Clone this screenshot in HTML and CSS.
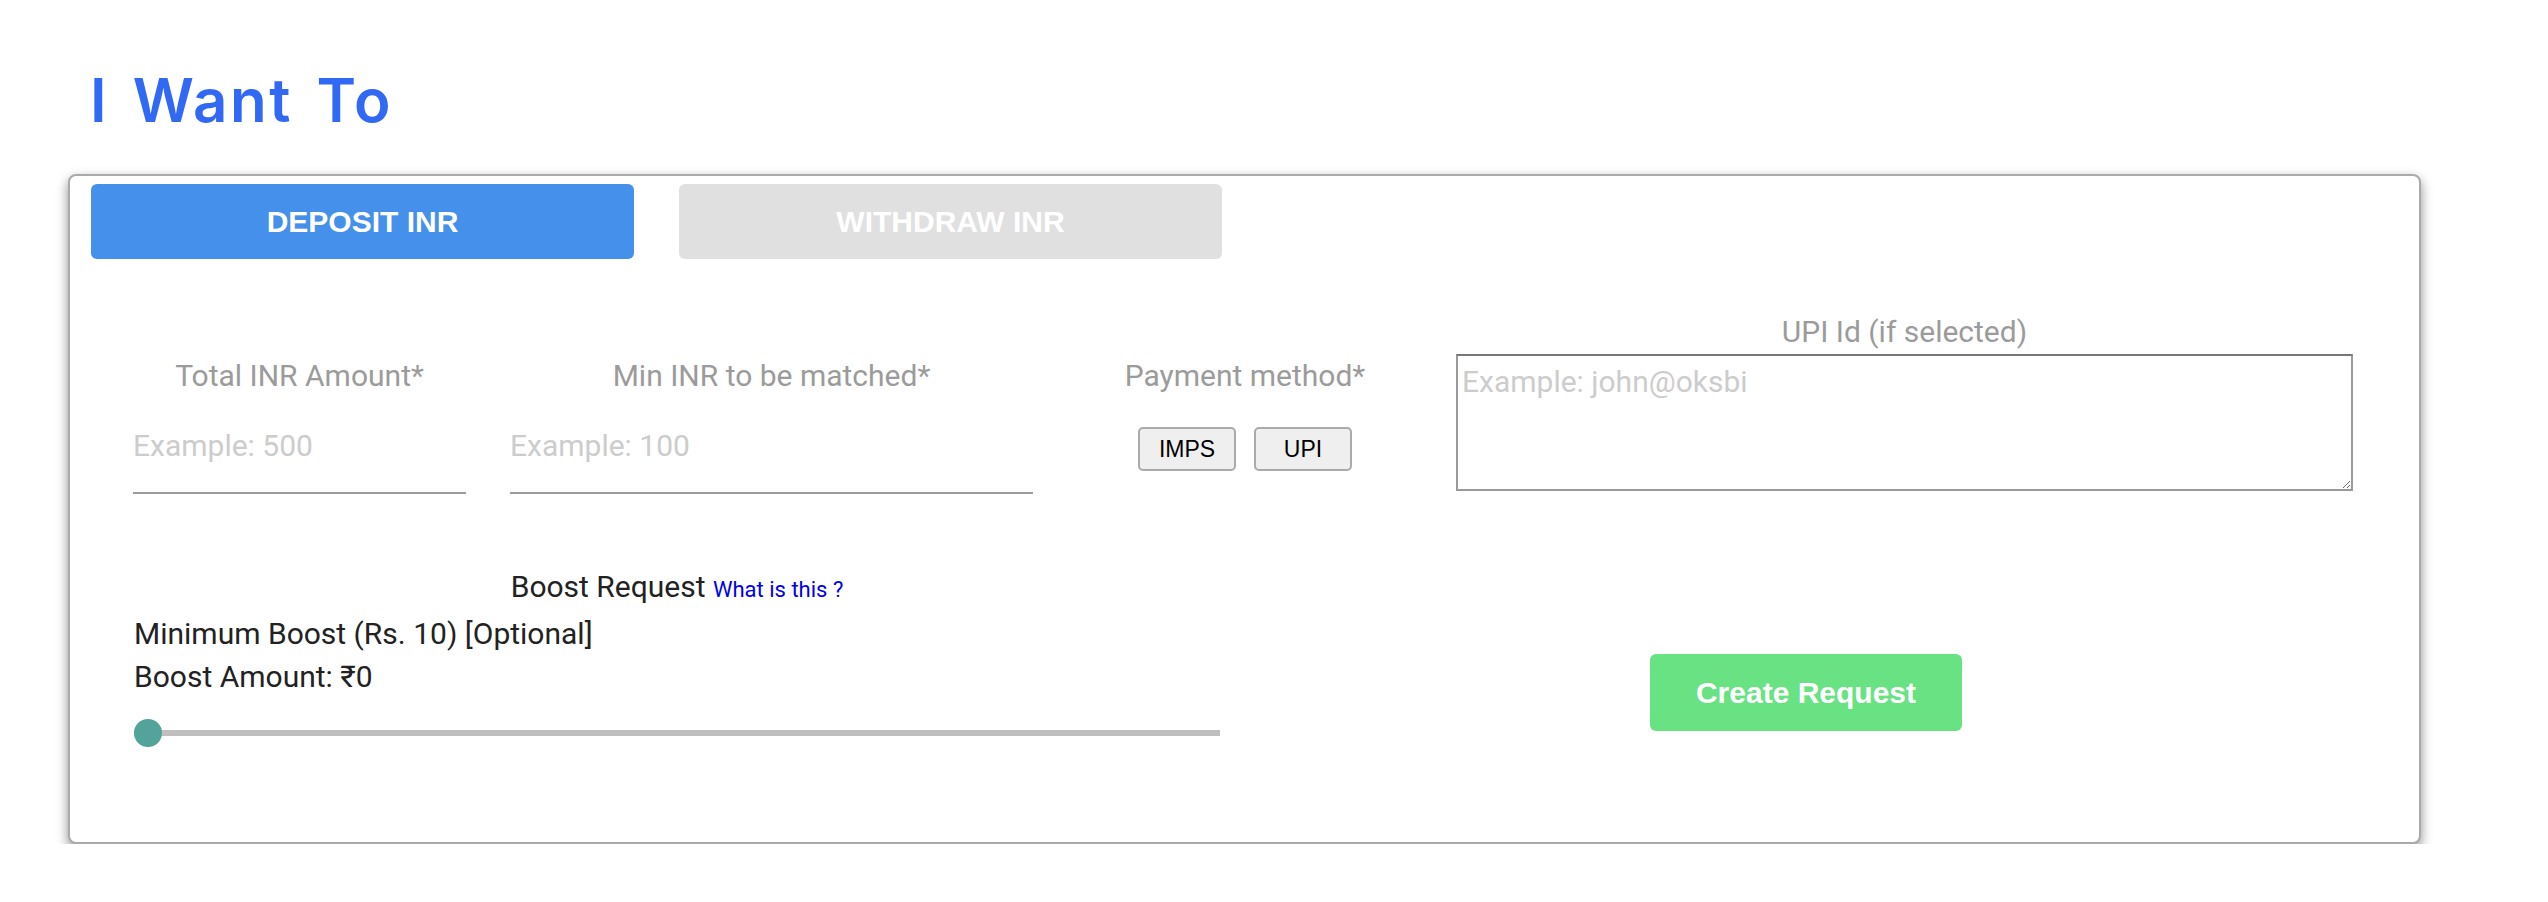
FILE: index.html
```html
<!DOCTYPE html>
<html>
<head>
<meta charset="utf-8">
<link rel="stylesheet" href="styles.css">
</head>
<body>
<div class="page">
  <h1 class="title">I Want To</h1>
  <div class="card">
    <div class="tabs">
      <button class="tab tab-active">DEPOSIT INR</button>
      <button class="tab tab-inactive">WITHDRAW INR</button>
    </div>
    <div class="fields-row">
      <div class="field field-total">
        <label class="label">Total INR Amount*</label>
        <input class="line-input" type="text" placeholder="Example: 500">
      </div>
      <div class="field field-min">
        <label class="label">Min INR to be matched*</label>
        <input class="line-input" type="text" placeholder="Example: 100">
      </div>
      <div class="pay">
        <div class="label">Payment method*</div>
        <div class="pay-buttons">
          <button class="pay-btn">IMPS</button>
          <button class="pay-btn">UPI</button>
        </div>
      </div>
      <div class="upi">
        <label class="label">UPI Id (if selected)</label>
        <textarea class="upi-box" placeholder="Example: john@oksbi"></textarea>
      </div>
    </div>
    <div class="boost-row">
      <div class="boost">
        <div class="boost-head">Boost Request <a class="what" href="#">What is this ?</a></div>
        <div class="boost-line">Minimum Boost (Rs. 10) [Optional]</div>
        <div class="boost-line">Boost Amount: ₹0</div>
        <input class="slider" type="range" min="0" max="100" value="0">
      </div>
      <div class="create-wrap">
        <button class="create">Create Request</button>
      </div>
    </div>
  </div>
</div>
</body>
</html>
```
FILE: styles.css
```css
html, body {
  margin: 0;
  padding: 0;
  background: #ffffff;
}

.page {
  width: 2548px;
  padding-top: 64px;
}

.title {
  margin: 0 0 38px 90px;
  font-family: "Inter", "Liberation Sans", sans-serif;
  font-weight: 600;
  font-size: 60px;
  line-height: 72px;
  letter-spacing: 2.5px;
  word-spacing: 6px;
  color: #3169f5;
}

.card {
  margin-left: 68px;
  width: 2349px;
  height: 666px;
  border: 2px solid #aaaaaa;
  border-radius: 8px;
  background: #ffffff;
  box-shadow: 0 5px 12px rgba(0, 0, 0, 0.45);
}

.tabs {
  display: flex;
  gap: 45px;
  margin: 8px 0 0 21px;
}

.tab {
  width: 543px;
  height: 75px;
  border: none;
  border-radius: 6px;
  font-family: "Liberation Sans", Arial, sans-serif;
  font-weight: bold;
  font-size: 30px;
  color: #ffffff;
  padding: 0;
}

.tab-active {
  background: #4490ea;
}

.tab-inactive {
  background: #e0e0e0;
}

.fields-row {
  display: flex;
  align-items: flex-end;
  margin-left: 63px;
  height: 235px;
}

.label {
  display: block;
  font-family: "Roboto", sans-serif;
  font-size: 30px;
  line-height: 36px;
  color: #9b9b9b;
  text-align: center;
}

.field {
  display: flex;
  flex-direction: column;
}

.field-total {
  width: 333px;
}

.field-min {
  width: 523px;
  margin-left: 44px;
}

.line-input {
  display: block;
  width: 100%;
  box-sizing: content-box;
  height: 94px;
  margin-top: 4px;
  padding: 0;
  border: none;
  border-bottom: 2px solid #9b9b9b;
  outline: none;
  font-family: "Roboto", sans-serif;
  font-size: 30px;
  color: #333;
  background: transparent;
}

.line-input::placeholder,
.upi-box::placeholder {
  color: #cccccc;
}

.pay {
  width: 300px;
  margin-left: 62px;
  margin-bottom: 23px;
  display: flex;
  flex-direction: column;
  align-items: center;
}

.pay-buttons {
  display: flex;
  gap: 18px;
  margin-top: 33px;
}

.pay-btn {
  width: 98px;
  height: 44px;
  padding: 0;
  border: 2px solid #aaaaaa;
  border-radius: 5px;
  background: #efefef;
  font-family: "Liberation Sans", Arial, sans-serif;
  font-size: 23px;
  color: #000000;
}

.upi {
  width: 897px;
  margin-left: 61px;
  margin-bottom: 3px;
  display: flex;
  flex-direction: column;
}

.upi-box {
  display: block;
  box-sizing: border-box;
  width: 897px;
  height: 137px;
  margin-top: 4px;
  padding: 8px 4px 4px 4px;
  border: 2px solid #9a9a9a;
  border-top-color: #777777;
  border-radius: 0;
  font-family: "Roboto", sans-serif;
  font-size: 30px;
  line-height: 36px;
  color: #333;
  outline: none;
}

.boost-row {
  display: flex;
  margin-top: 71px;
  margin-left: 64px;
}

.boost {
  width: 1086px;
  font-family: "Roboto", sans-serif;
  font-size: 30px;
  line-height: 43px;
  color: #222222;
}

.boost-head {
  text-align: center;
  line-height: 44px;
}

.what {
  font-size: 22px;
  color: #0000ee;
  text-decoration: none;
}

.slider {
  -webkit-appearance: none;
  appearance: none;
  display: block;
  width: 1086px;
  height: 27px;
  margin: 21px 0 0 0;
  padding: 0;
  background: transparent;
}

.slider::-webkit-slider-runnable-track {
  height: 6px;
  background: #c0bfc0;
  border: none;
}

.slider::-webkit-slider-thumb {
  -webkit-appearance: none;
  appearance: none;
  width: 28px;
  height: 28px;
  margin-top: -11px;
  border-radius: 50%;
  background: #52a39a;
  border: none;
}

.create-wrap {
  flex: 1;
  padding-left: 430px;
  padding-top: 89px;
}

.create {
  width: 312px;
  height: 77px;
  border: none;
  border-radius: 6px;
  background: #68e283;
  color: #ffffff;
  font-family: "Liberation Sans", Arial, sans-serif;
  font-weight: bold;
  font-size: 30px;
  padding: 0;
}
```
